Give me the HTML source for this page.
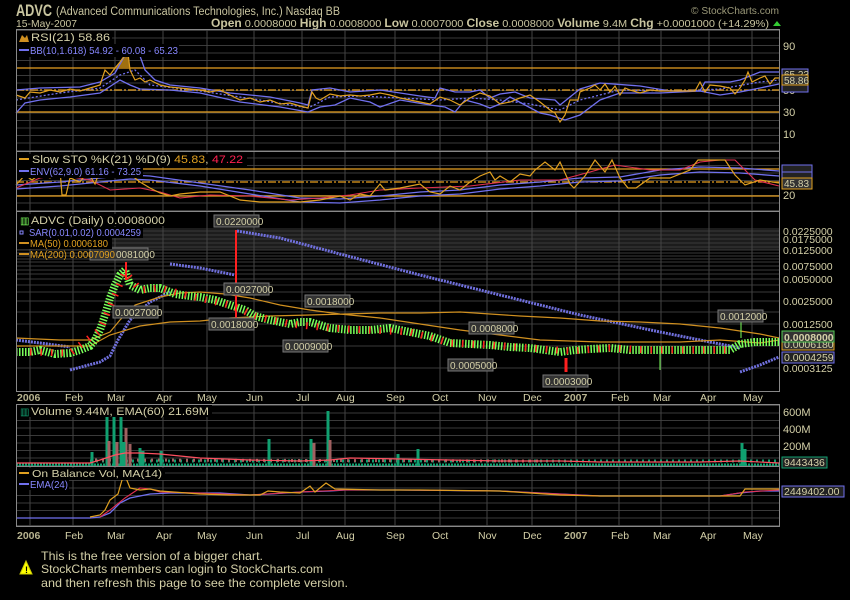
<!DOCTYPE html>
<html><head><meta charset="utf-8"><style>
html,body{margin:0;padding:0;background:#000;}
body{width:850px;height:600px;overflow:hidden;position:relative;font-family:"Liberation Sans",sans-serif;color:#d4d0a8;}
svg{position:absolute;left:0;top:0;}
</style></head><body>
<svg width="850" height="600" viewBox="0 0 850 600" font-family="Liberation Sans, sans-serif">
<defs>
<pattern id="hg" width="10" height="7.5" patternUnits="userSpaceOnUse"><line x1="0" y1="0.5" x2="10" y2="0.5" stroke="#3a3a3a" stroke-width="1"/></pattern>
</defs>
<text x="16" y="16" font-size="17" font-weight="bold" fill="#c9c5a0" textLength="36" lengthAdjust="spacingAndGlyphs">ADVC</text>
<text x="56" y="15" font-size="11.5" fill="#c9c5a0" textLength="284" lengthAdjust="spacingAndGlyphs">(Advanced Communications Technologies, Inc.)  Nasdaq BB</text>
<text x="16" y="27" font-size="10.5" fill="#c9c5a0" textLength="61" lengthAdjust="spacingAndGlyphs">15-May-2007</text>
<text x="211" y="27" font-size="10.5" fill="#c9c5a0" textLength="558" lengthAdjust="spacingAndGlyphs"><tspan font-weight="bold" font-size="11.5">Open</tspan> 0.0008000 <tspan font-weight="bold" font-size="11.5">High</tspan> 0.0008000 <tspan font-weight="bold" font-size="11.5">Low</tspan> 0.0007000 <tspan font-weight="bold" font-size="11.5">Close</tspan> 0.0008000 <tspan font-weight="bold" font-size="11.5">Volume</tspan> 9.4M <tspan font-weight="bold" font-size="11.5">Chg</tspan> +0.0001000 (+14.29%)</text>
<polygon points="773,26 777,21 781,26" fill="#3c3"/>
<text x="691" y="14" font-size="10" fill="#9a9878" textLength="88" lengthAdjust="spacingAndGlyphs">© StockCharts.com</text>

<rect x="16" y="29" width="763" height="123" fill="url(#hg)"/>
<rect x="16" y="152" width="763" height="60" fill="url(#hg)"/>
<rect x="16" y="404" width="763" height="63" fill="url(#hg)"/>
<rect x="16" y="467" width="763" height="59" fill="url(#hg)"/>
<g stroke="#3a3a3a">
<rect x="16" y="228" width="763" height="22" fill="#1c1c1c" stroke="none"/>
<line x1="16" y1="231" x2="779" y2="231"/><line x1="16" y1="235" x2="779" y2="235"/><line x1="16" y1="239" x2="779" y2="239"/><line x1="16" y1="243" x2="779" y2="243"/><line x1="16" y1="247" x2="779" y2="247"/><line x1="16" y1="250" x2="779" y2="250"/><line x1="16" y1="253" x2="779" y2="253"/><line x1="16" y1="256" x2="779" y2="256"/><line x1="16" y1="259" x2="779" y2="259"/><line x1="16" y1="262" x2="779" y2="262"/><line x1="16" y1="266" x2="779" y2="266"/><line x1="16" y1="270" x2="779" y2="270"/><line x1="16" y1="274" x2="779" y2="274"/><line x1="16" y1="279" x2="779" y2="279"/><line x1="16" y1="285" x2="779" y2="285"/><line x1="16" y1="292" x2="779" y2="292"/><line x1="16" y1="301" x2="779" y2="301"/><line x1="16" y1="312" x2="779" y2="312"/><line x1="16" y1="324" x2="779" y2="324"/><line x1="16" y1="346" x2="779" y2="346"/><line x1="16" y1="368" x2="779" y2="368"/>
</g>
<g stroke="#444" stroke-width="1">
<line x1="30" y1="29" x2="30" y2="391"/><line x1="73" y1="29" x2="73" y2="391"/><line x1="115" y1="29" x2="115" y2="391"/><line x1="163" y1="29" x2="163" y2="391"/><line x1="207" y1="29" x2="207" y2="391"/><line x1="254" y1="29" x2="254" y2="391"/><line x1="302" y1="29" x2="302" y2="391"/><line x1="345" y1="29" x2="345" y2="391"/><line x1="395" y1="29" x2="395" y2="391"/><line x1="440" y1="29" x2="440" y2="391"/><line x1="487" y1="29" x2="487" y2="391"/><line x1="532" y1="29" x2="532" y2="391"/><line x1="576" y1="29" x2="576" y2="391"/><line x1="619" y1="29" x2="619" y2="391"/><line x1="661" y1="29" x2="661" y2="391"/><line x1="709" y1="29" x2="709" y2="391"/><line x1="752" y1="29" x2="752" y2="391"/>
<line x1="30" y1="404" x2="30" y2="526"/><line x1="73" y1="404" x2="73" y2="526"/><line x1="115" y1="404" x2="115" y2="526"/><line x1="163" y1="404" x2="163" y2="526"/><line x1="207" y1="404" x2="207" y2="526"/><line x1="254" y1="404" x2="254" y2="526"/><line x1="302" y1="404" x2="302" y2="526"/><line x1="345" y1="404" x2="345" y2="526"/><line x1="395" y1="404" x2="395" y2="526"/><line x1="440" y1="404" x2="440" y2="526"/><line x1="487" y1="404" x2="487" y2="526"/><line x1="532" y1="404" x2="532" y2="526"/><line x1="576" y1="404" x2="576" y2="526"/><line x1="619" y1="404" x2="619" y2="526"/><line x1="661" y1="404" x2="661" y2="526"/><line x1="709" y1="404" x2="709" y2="526"/><line x1="752" y1="404" x2="752" y2="526"/>
</g>

<g stroke="#e8a020" stroke-width="1.3" fill="none">
<line x1="16" y1="68" x2="779" y2="68"/><line x1="16" y1="112" x2="779" y2="112"/>
<line x1="16" y1="90" x2="779" y2="90" stroke-dasharray="8 2 2 2"/>
</g>
<polygon points="115,68 120,62 125,55 128,53 130,68" fill="#a07010"/>
<g fill="none" stroke="#7070ee" stroke-width="1.3">
<path d="M16,90 L40,88 80,87 100,82 115,73 125,55 140,56 145,70 155,80 170,85 200,88 230,93 270,97 300,103 308,105 312,90 330,88 350,92 380,90 420,96 435,98 440,88 455,92 470,92 480,90 490,98 500,94 515,92 530,98 555,100 560,105 580,89 600,83 640,86 670,91 700,91 705,82 730,82 740,80 760,72 779,72"/>
<path d="M16,113 L25,103 40,100 70,97 100,93 120,80 130,85 140,89 170,90 200,93 240,102 280,107 308,112 320,107 335,105 350,98 370,102 380,107 400,100 430,105 445,107 455,112 465,100 480,104 490,108 500,104 510,97 540,113 550,115 565,120 580,115 600,100 620,93 660,93 700,91 720,95 740,92 760,88 779,84"/>
<path d="M16,100 L60,93 100,88 120,75 135,70 150,85 200,91 260,100 308,108 330,97 360,96 400,98 440,100 470,98 500,100 530,104 560,110 580,100 620,90 680,91 720,89 760,82 779,80" stroke-dasharray="2 2"/>
</g>
<path fill="none" stroke="#e0a020" stroke-width="1.2" d="M16,95 L25,98 30,92 40,93 50,90 60,92 70,89 80,91 90,88 100,85 105,70 110,75 115,68 120,62 125,55 128,53 130,70 135,80 140,78 145,82 150,80 160,85 170,87 180,88 190,89 200,90 210,92 220,90 230,95 240,100 250,98 260,102 270,100 280,104 290,103 300,106 308,108 312,92 316,98 320,100 330,94 340,96 350,95 360,96 370,95 380,93 390,95 400,98 410,100 420,102 430,104 440,97 450,100 460,105 470,98 480,93 490,96 500,104 510,102 520,98 530,95 540,102 550,110 555,113 560,122 565,115 570,100 578,100 580,92 590,88 595,85 600,90 605,84 610,92 615,86 620,95 625,88 630,90 640,93 650,90 660,91 680,91 695,91 700,82 705,92 710,85 720,86 730,88 735,94 740,88 745,80 748,72 752,82 760,78 765,76 770,84 775,78 779,78"/>
<rect x="17" y="31" width="95" height="13" fill="#000"/>
<polygon points="19,42 22,35 25,38 27,35 29,42" fill="#d09020"/>
<text x="31" y="41" font-size="11" fill="#d4d0a8" textLength="79" lengthAdjust="spacingAndGlyphs">RSI(21) 58.86</text>
<rect x="17" y="44" width="162" height="13" fill="#000"/>
<line x1="19" y1="50" x2="29" y2="50" stroke="#7070ee" stroke-width="2"/>
<text x="30" y="54" font-size="10.5" fill="#8888ff" textLength="148" lengthAdjust="spacingAndGlyphs">BB(10,1.618) 54.92 - 60.08 - 65.23</text>
<g font-size="11" fill="#d4d0a8">
<text x="783" y="50">90</text><text x="783" y="94">50</text><text x="783" y="116">30</text><text x="783" y="138">10</text>
</g>
<rect x="782" y="69" width="26" height="10" fill="#222" stroke="#7070ee"/>
<text x="784" y="78" font-size="10" fill="#d4d0a8">65.23</text>
<rect x="782" y="82" width="26" height="10" fill="#222" stroke="#7070ee"/>
<rect x="782" y="75" width="26" height="10" fill="#333" stroke="#e0a020"/>
<text x="784" y="84" font-size="10" fill="#d4d0a8">58.86</text>

<g stroke="#e8a020" stroke-width="1.3" fill="none">
<line x1="16" y1="169" x2="779" y2="169"/><line x1="16" y1="196" x2="779" y2="196"/>
<line x1="16" y1="182" x2="779" y2="182" stroke-dasharray="8 2 2 2"/>
</g>
<g fill="none" stroke="#7070ee" stroke-width="1.3">
<path d="M16,185 L60,182 100,178 130,175 150,176 200,183 250,190 300,198 340,199 380,196 420,192 460,190 500,185 540,182 580,178 620,177 660,170 700,167 740,168 779,171"/>
<path d="M16,189 L60,186 100,182 130,179 150,180 200,186 250,194 300,202 340,203 380,200 420,196 460,194 500,189 540,186 580,182 620,181 660,175 700,172 740,173 779,176"/>
</g>
<path fill="none" stroke="#e03050" stroke-width="1.1" d="M16,188 L40,178 60,175 90,180 110,190 140,188 160,192 180,198 210,195 250,196 290,200 320,198 350,195 380,190 420,188 470,186 520,180 560,180 590,172 615,165 650,170 680,170 700,162 720,160 735,160 755,180 779,186"/>
<path fill="none" stroke="#e0a020" stroke-width="1.2" d="M16,185 L25,175 32,180 40,174 50,178 60,170 62,195 66,195 70,178 80,182 85,175 90,176 95,184 100,170 130,174 140,182 150,188 160,193 170,196 180,194 200,192 220,192 240,200 260,202 280,202 300,202 320,200 340,196 350,200 360,194 370,196 380,184 385,190 400,188 420,184 430,192 440,194 450,186 460,190 470,182 480,176 490,172 495,180 500,176 510,182 520,174 530,176 535,170 545,162 555,170 560,162 570,184 574,188 585,176 595,160 605,172 612,160 620,178 628,188 636,188 650,178 670,178 690,170 698,160 715,160 725,160 735,175 745,185 760,180 779,183"/>
<rect x="17" y="154" width="230" height="13" fill="#000"/>
<line x1="19" y1="159" x2="29" y2="159" stroke="#e0a020" stroke-width="2"/>
<text x="32" y="163" font-size="11" fill="#d4d0a8" textLength="211" lengthAdjust="spacingAndGlyphs">Slow STO %K(21) %D(9) <tspan fill="#e0a020">45.83</tspan>, <tspan fill="#ff2050">47.22</tspan></text>
<rect x="17" y="166" width="126" height="12" fill="#000"/>
<line x1="19" y1="171" x2="29" y2="171" stroke="#7070ee" stroke-width="2"/>
<text x="30" y="175" font-size="10.5" fill="#8888ff" textLength="111" lengthAdjust="spacingAndGlyphs">ENV(62,9.0) 61.16 - 73.25</text>
<text x="783" y="199" font-size="11" fill="#d4d0a8">20</text>
<rect x="782" y="165" width="30" height="10" fill="#222" stroke="#7070ee"/>
<rect x="782" y="172" width="30" height="10" fill="#222" stroke="#7070ee"/>
<rect x="782" y="178" width="30" height="11" fill="#333" stroke="#e0a020"/>
<text x="784" y="187" font-size="10" fill="#d4d0a8">45.83</text>

<g fill="none" stroke="#7070dd" stroke-width="3" stroke-dasharray="2 1">
<path d="M16,340 L40,343 70,347"/>
<path d="M70,370 L100,362 110,356 118,340 130,320 150,302 170,292"/>
<path d="M170,264 L200,268 235,275"/>
<path d="M237,231 L280,238 340,254 420,275 500,295 580,315 660,332 740,348"/>
<path d="M740,372 L760,365 779,357"/>
</g>
<g fill="none" stroke="#d09020" stroke-width="1.2">
<path d="M16,338 L60,340 90,340 110,332 120,320 135,305 160,297 180,293 200,292 225,294 250,298 280,305 310,310 340,314 380,318 420,324 460,330 500,335 540,340 600,342 640,342 680,342 720,340 760,343 779,340"/>
<path d="M16,346 L60,346 90,346 110,335 140,326 170,322 200,321 230,318 270,316 310,315 345,314 380,313 420,313 460,312 490,314 520,316 560,318 600,321 640,322 680,324 720,328 760,334 779,338"/>
</g>
<g fill="none">
<path stroke="#7aff5a" stroke-width="8" stroke-dasharray="1.5 1.5" d="M16,352 L30,352 40,350 55,354 70,353 80,350 90,346 95,340 100,330 105,315 110,298 115,285 120,275 125,270 130,285 140,290 150,288 160,288 175,294 190,296 200,297 215,300 230,305 245,310 255,316 270,320 290,324 300,322 310,322 330,328 350,330 370,330 390,328 410,332 430,336 450,343 470,344 490,345 510,347 530,348 545,350 560,352 575,350 590,349 610,348 630,350 650,350 670,350 690,350 710,350 730,350 740,344 755,342 779,342"/>
<path stroke="#ff2020" stroke-width="7" stroke-dasharray="1.5 9" d="M30,352 L70,353 100,330 125,272 140,290 160,288 190,296 230,305 255,316 290,324 330,328 370,330 410,332 450,343 490,345 530,348 570,351 610,348 650,350 690,350 730,350"/>
</g>
<line x1="236" y1="230" x2="236" y2="330" stroke="#ff2020" stroke-width="2"/>
<line x1="126" y1="262" x2="126" y2="280" stroke="#ff2020" stroke-width="2"/>
<line x1="566" y1="358" x2="566" y2="372" stroke="#ff2020" stroke-width="3"/>
<line x1="741" y1="322" x2="741" y2="338" stroke="#7aff5a" stroke-width="1"/>
<line x1="660" y1="350" x2="660" y2="370" stroke="#7aff5a" stroke-width="1"/>
<g font-size="10" fill="#d4d0a8">
<rect x="214" y="215" width="45" height="12" fill="#333" stroke="#777"/><text x="216" y="225">0.0220000</text>
<rect x="90" y="248" width="58" height="12" fill="#333" stroke="#777"/><text x="116" y="258">0081000</text>
<rect x="113" y="306" width="45" height="12" fill="#333" stroke="#777"/><text x="115" y="316">0.0027000</text>
<rect x="224" y="283" width="45" height="12" fill="#333" stroke="#777"/><text x="226" y="293">0.0027000</text>
<rect x="209" y="318" width="45" height="12" fill="#333" stroke="#777"/><text x="211" y="328">0.0018000</text>
<rect x="305" y="295" width="45" height="12" fill="#333" stroke="#777"/><text x="307" y="305">0.0018000</text>
<rect x="283" y="340" width="45" height="12" fill="#333" stroke="#777"/><text x="285" y="350">0.0009000</text>
<rect x="469" y="322" width="45" height="12" fill="#333" stroke="#777"/><text x="471" y="332">0.0008000</text>
<rect x="448" y="359" width="45" height="12" fill="#333" stroke="#777"/><text x="450" y="369">0.0005000</text>
<rect x="543" y="375" width="45" height="12" fill="#333" stroke="#777"/><text x="545" y="385">0.0003000</text>
<rect x="718" y="310" width="45" height="12" fill="#333" stroke="#777"/><text x="720" y="320">0.0012000</text>
</g>
<rect x="17" y="214" width="150" height="12" fill="#000"/>
<text x="20" y="224" font-size="10" fill="#7aff5a">▥</text>
<text x="31" y="224" font-size="11" fill="#d4d0a8" textLength="134" lengthAdjust="spacingAndGlyphs">ADVC (Daily) 0.0008000</text>
<rect x="17" y="227" width="126" height="11" fill="#000"/>
<rect x="20" y="231" width="3" height="3" fill="none" stroke="#8888ff"/>
<text x="29" y="236" font-size="10" fill="#8888ff" textLength="112" lengthAdjust="spacingAndGlyphs">SAR(0.01,0.02) 0.0004259</text>
<rect x="17" y="238" width="95" height="11" fill="#000"/>
<line x1="19" y1="243" x2="29" y2="243" stroke="#d09020" stroke-width="2"/>
<text x="30" y="247" font-size="10" fill="#e0a020" textLength="78" lengthAdjust="spacingAndGlyphs">MA(50) 0.0006180</text>
<line x1="19" y1="254" x2="29" y2="254" stroke="#d09020" stroke-width="2"/>
<text x="30" y="258" font-size="10" fill="#e0a020" textLength="85" lengthAdjust="spacingAndGlyphs">MA(200) 0.0007090</text>
<g font-size="10.5" fill="#d4d0a8">
<text x="783" y="235">0.0225000</text><text x="783" y="243">0.0175000</text><text x="783" y="254">0.0125000</text><text x="783" y="270">0.0075000</text><text x="783" y="283">0.0050000</text><text x="783" y="305">0.0025000</text><text x="783" y="328">0.0012500</text><text x="783" y="372">0.0003125</text>
</g>
<rect x="782" y="339" width="52" height="11" fill="#333" stroke="#e0a020"/><text x="784" y="348" font-size="10.5" fill="#d4d0a8">0.0006180</text>
<rect x="782" y="331" width="52" height="11" fill="#333" stroke="#5c5"/><text x="784" y="341" font-size="10.5" font-weight="bold" fill="#d4d0a8">0.0008000</text>
<rect x="782" y="352" width="52" height="11" fill="#222" stroke="#7070ee"/><text x="784" y="361" font-size="10.5" fill="#d4d0a8">0.0004259</text>

<g font-size="10.5" fill="#d4d0a8">
<text x="17" y="401" font-weight="bold" fill="#b8b490">2006</text><text x="65" y="401">Feb</text><text x="107" y="401">Mar</text><text x="156" y="401">Apr</text><text x="197" y="401">May</text><text x="246" y="401">Jun</text><text x="296" y="401">Jul</text><text x="336" y="401">Aug</text><text x="386" y="401">Sep</text><text x="432" y="401">Oct</text><text x="478" y="401">Nov</text><text x="523" y="401">Dec</text><text x="564" y="401" font-weight="bold" fill="#b8b490">2007</text><text x="611" y="401">Feb</text><text x="653" y="401">Mar</text><text x="700" y="401">Apr</text><text x="743" y="401">May</text>
</g>

<g fill="none" stroke-width="3" stroke-dasharray="2 1">
<path stroke="#10a070" d="M16,465 L779,465"/>
<path stroke="#10a070" stroke-dasharray="2 4" d="M90,461 L779,461"/>
<path stroke="#a06060" stroke-dasharray="2 5" d="M95,460 L540,461"/>
</g>
<g stroke-width="3">
<line x1="107" y1="466" x2="107" y2="417" stroke="#10a070"/><line x1="114" y1="466" x2="114" y2="417" stroke="#10a070"/><line x1="121" y1="466" x2="121" y2="417" stroke="#10a070"/>
<line x1="109" y1="466" x2="109" y2="441" stroke="#a06060"/><line x1="117" y1="466" x2="117" y2="442" stroke="#a06060"/><line x1="126" y1="466" x2="126" y2="428" stroke="#a06060"/><line x1="130" y1="466" x2="130" y2="444" stroke="#a06060"/><line x1="124" y1="466" x2="124" y2="442" stroke="#10a070"/><line x1="140" y1="466" x2="140" y2="448" stroke="#10a070"/><line x1="143" y1="466" x2="143" y2="451" stroke="#10a070"/>
<line x1="92" y1="466" x2="92" y2="452" stroke="#10a070"/><line x1="161" y1="466" x2="161" y2="451" stroke="#10a070"/>
<line x1="269" y1="466" x2="269" y2="439" stroke="#10a070"/><line x1="311" y1="466" x2="311" y2="439" stroke="#10a070"/><line x1="314" y1="466" x2="314" y2="443" stroke="#a06060"/>
<line x1="328" y1="466" x2="328" y2="411" stroke="#10a070"/><line x1="330" y1="466" x2="330" y2="440" stroke="#a06060"/>
<line x1="398" y1="466" x2="398" y2="454" stroke="#10a070"/><line x1="418" y1="466" x2="418" y2="449" stroke="#10a070"/>
<line x1="742" y1="466" x2="742" y2="443" stroke="#10a070"/><line x1="745" y1="466" x2="745" y2="449" stroke="#10a070"/>
</g>
<path fill="none" stroke="#ff5060" stroke-width="1.2" d="M16,463 L90,463 100,460 115,455 125,453 140,453 160,454 200,458 250,460 300,461 330,460 350,458 400,459 450,460 500,461 560,461 600,462 650,462 700,462 740,461 779,463"/>
<rect x="17" y="405" width="195" height="12" fill="#000"/>
<text x="20" y="415" font-size="10" fill="#10a070">▥</text>
<text x="31" y="415" font-size="11" fill="#d4d0a8" textLength="178" lengthAdjust="spacingAndGlyphs">Volume 9.44M, EMA(60) 21.69M</text>
<g font-size="11" fill="#d4d0a8"><text x="783" y="416">600M</text><text x="783" y="433">400M</text><text x="783" y="450">200M</text></g>
<rect x="782" y="457" width="45" height="11" fill="#222" stroke="#10a070"/><text x="784" y="466" font-size="10.5" fill="#d4d0a8">9443436</text>

<path fill="none" stroke="#7070ee" stroke-width="1.3" d="M16,518 L90,518 100,517 110,513 120,503 130,498 150,494 170,493 220,493 250,495 270,494 300,492 330,491 345,490 400,490 500,491 560,494 600,496 680,496 720,496 740,493 760,491 779,491"/>
<path fill="none" stroke="#e03050" stroke-width="1.1" d="M100,517 L110,510 125,498 140,488 150,489 160,492 200,493 250,495 300,492 345,490 400,490 500,491 560,494 600,496 720,496 745,492 779,490"/>
<path fill="none" stroke="#e0a020" stroke-width="1.2" d="M90,517 L100,515 105,510 110,500 118,494 122,480 126,478 130,488 140,490 150,489 160,491 200,494 230,495 260,495 268,491 280,492 300,493 310,486 315,492 326,483 335,489 380,490 420,490 500,491 560,495 600,496 700,496 740,496 745,489 760,489 779,489"/>
<rect x="17" y="468" width="148" height="12" fill="#000"/>
<line x1="19" y1="473" x2="29" y2="473" stroke="#e0a020" stroke-width="2"/>
<text x="32" y="477" font-size="10.5" fill="#d4d0a8" textLength="130" lengthAdjust="spacingAndGlyphs">On Balance Vol, MA(14)</text>
<rect x="17" y="479" width="52" height="11" fill="#000"/>
<line x1="19" y1="484" x2="29" y2="484" stroke="#7070ee" stroke-width="2"/>
<text x="30" y="488" font-size="10.5" fill="#8888ff" textLength="38" lengthAdjust="spacingAndGlyphs">EMA(24)</text>
<rect x="782" y="486" width="62" height="11" fill="#222" stroke="#7070ee"/><text x="784" y="495" font-size="10.5" fill="#d4d0a8">2449402.00</text>

<g fill="none" stroke="#888" stroke-width="1">
<rect x="16.5" y="29.5" width="763" height="122"/>
<rect x="16.5" y="151.5" width="763" height="60"/>
<rect x="16.5" y="211.5" width="763" height="180"/>
<rect x="16.5" y="404.5" width="763" height="62"/>
<rect x="16.5" y="466.5" width="763" height="60"/>
</g>

<g font-size="10.5" fill="#d4d0a8">
<text x="17" y="539" font-weight="bold" fill="#b8b490">2006</text><text x="65" y="539">Feb</text><text x="107" y="539">Mar</text><text x="156" y="539">Apr</text><text x="197" y="539">May</text><text x="246" y="539">Jun</text><text x="296" y="539">Jul</text><text x="336" y="539">Aug</text><text x="386" y="539">Sep</text><text x="432" y="539">Oct</text><text x="478" y="539">Nov</text><text x="523" y="539">Dec</text><text x="564" y="539" font-weight="bold" fill="#b8b490">2007</text><text x="611" y="539">Feb</text><text x="653" y="539">Mar</text><text x="700" y="539">Apr</text><text x="743" y="539">May</text>
</g>

<polygon points="26,561 32,574 20,574" fill="#ff0" stroke="#cc0"/>
<text x="25" y="573" font-size="9" font-weight="bold" fill="#000">!</text>
<g font-size="12" fill="#d4d0a8">
<text x="41" y="560" textLength="222" lengthAdjust="spacingAndGlyphs">This is the free version of a bigger chart.</text>
<text x="41" y="573" textLength="282" lengthAdjust="spacingAndGlyphs">StockCharts members can login to StockCharts.com</text>
<text x="41" y="587" textLength="307" lengthAdjust="spacingAndGlyphs">and then refresh this page to see the complete version.</text>
</g>
</svg>
</body></html>
